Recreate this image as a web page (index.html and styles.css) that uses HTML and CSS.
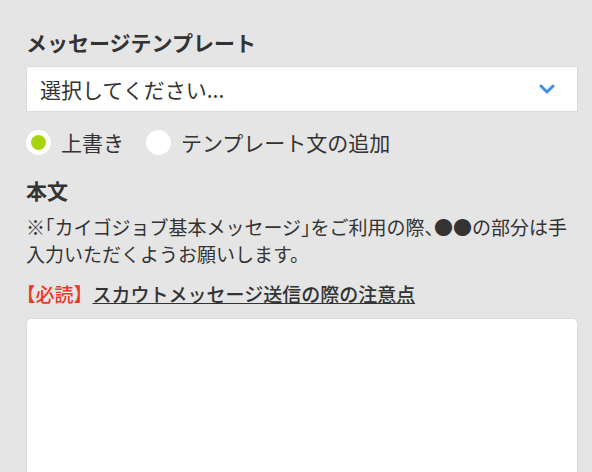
FILE: index.html
```html
<!DOCTYPE html>
<html lang="ja">
<head>
  <meta charset="UTF-8" />
  <meta name="viewport" content="width=device-width, initial-scale=1.0" />
  <title>メッセージ作成</title>
  <link rel="stylesheet" href="styles.css">
</head>
<body>
  <form class="message-form">
    <h2 class="field-title">メッセージテンプレート</h2>
    <div class="select-box">
      <span>選択してください...</span>
      <svg class="chevron" width="16" height="10" viewBox="0 0 16 10">
        <path d="M2 2 L8 8 L14 2" fill="none" stroke="#3c8ee8" stroke-width="3" stroke-linecap="round" stroke-linejoin="round"/>
      </svg>
    </div>

    <div class="radio-row">
      <label class="radio">
        <span class="radio-dot checked"></span>上書き
      </label>
      <label class="radio">
        <span class="radio-dot"></span>テンプレート文の追加
      </label>
    </div>

    <h2 class="field-title body-title">本文</h2>
    <p class="note">※「カイゴジョブ基本メッセージ」をご利用の際、●●の部分は手入力いただくようお願いします。</p>
    <p class="notice"><span class="must">【必読】</span><a href="#">スカウトメッセージ送信の際の注意点</a></p>

    <div class="textarea"></div>
  </form>
</body>
</html>
```

FILE: styles.css
```css
* {
  margin: 0;
  padding: 0;
  box-sizing: border-box;
}
body {
  font-family: 'Noto Sans CJK JP', 'Noto Sans', sans-serif;
  background-color: #e5e5e5;
  color: #333;
}
.message-form {
  padding: 27px 14px 0 26px;
}
.field-title {
  font-size: 21px;
  font-weight: bold;
  line-height: 30px;
  margin-bottom: 9px;
}
.select-box {
  height: 46px;
  background: #fff;
  border: 1px solid #dcdcdc;
  display: flex;
  align-items: center;
  justify-content: space-between;
  padding: 0 22px 0 13px;
  font-size: 21px;
}
.radio-row {
  display: flex;
  gap: 22px;
  margin-top: 15px;
  height: 30px;
  align-items: center;
}
.radio {
  display: flex;
  align-items: center;
  gap: 10px;
  font-size: 21px;
}
.radio-dot {
  width: 25px;
  height: 25px;
  border-radius: 50%;
  background: #fff;
  display: flex;
  align-items: center;
  justify-content: center;
}
.radio-dot.checked::after {
  content: '';
  width: 15px;
  height: 15px;
  border-radius: 50%;
  background: #a6d40e;
}
.body-title {
  margin-top: 18px;
  margin-bottom: 0;
}
.note {
  font-size: 19px;
  line-height: 27px;
  margin-top: 8px;
  font-feature-settings: "halt";
}
.notice {
  font-size: 19px;
  line-height: 27px;
  margin-top: 13px;
  font-weight: 500;
  text-spacing-trim: trim-start;
}
.must {
  color: #e8392a;
}
.notice a {
  color: #333;
  text-decoration: underline;
}
.textarea {
  margin-top: 11px;
  height: 200px;
  background: #fff;
  border: 1px solid #dcdcdc;
  border-radius: 5px;
}
```
